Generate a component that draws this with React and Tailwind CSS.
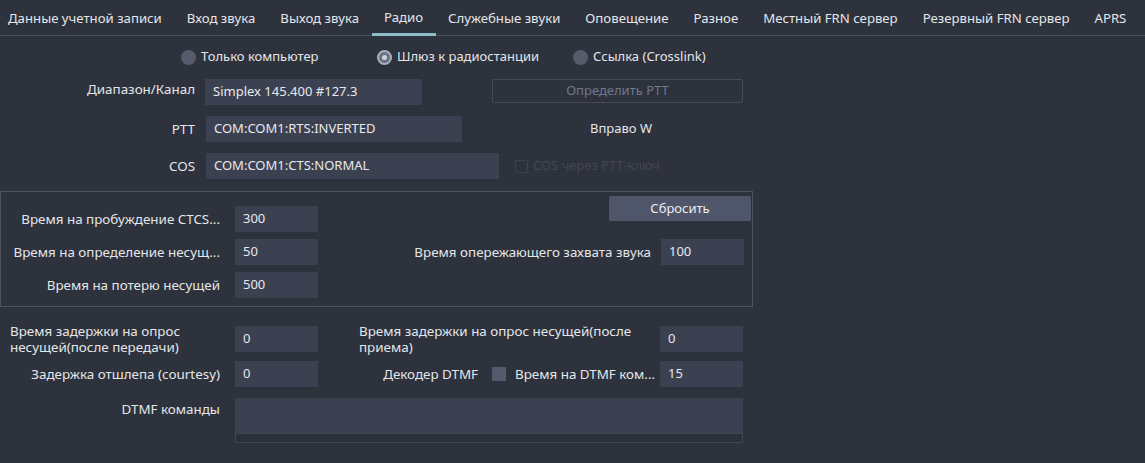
import React from 'react';

const tabs = [
  'Данные учетной записи',
  'Вход звука',
  'Выход звука',
  'Радио',
  'Служебные звуки',
  'Оповещение',
  'Разное',
  'Местный FRN сервер',
  'Резервный FRN сервер',
  'APRS',
];

function Field({ value = '', className = '' }) {
  return (
    <div className={`h-[26px] bg-[#3c4151] flex items-center pl-[8px] text-[13px] text-[#e8e8ec] ${className}`}>
      {value}
    </div>
  );
}

function Radio({ label, checked }) {
  return (
    <div className="flex items-center w-[196px]">
      {checked ? (
        <span className="w-[15px] h-[15px] rounded-full border-2 border-[#a9b1be] bg-[#6b7282] flex items-center justify-center">
          <span className="w-[5px] h-[5px] rounded-full bg-[#c9d2de]" />
        </span>
      ) : (
        <span className="w-[15px] h-[15px] rounded-full bg-[#575c6c]" />
      )}
      <span className="ml-[5px]">{label}</span>
    </div>
  );
}

function NumRow({ label, value }) {
  return (
    <div className="flex items-center h-[26px]">
      <div className="w-[219px] text-right whitespace-nowrap">{label}</div>
      <Field value={value} className="ml-[15px] w-[83px]" />
    </div>
  );
}

export default function App() {
  return (
    <div
      className="w-[1145px] h-[463px] bg-[#2d323c] text-[#e4e6ea] text-[13.4px] overflow-hidden"
      style={{ fontFamily: '"Noto Sans", "DejaVu Sans", sans-serif' }}
    >
      {/* Tabs */}
      <div className="flex h-[36px] border-b border-[#4a4f5a] -ml-[4.5px] text-[13.2px]">
        {tabs.map((t) => (
          <div
            key={t}
            className={`px-[12.5px] flex items-center whitespace-nowrap pt-[3px] ${
              t === 'Радио' ? 'border-b-[3px] border-[#8dbdc8] mb-[-1px]' : ''
            }`}
          >
            {t}
          </div>
        ))}
      </div>

      {/* Mode */}
      <div className="flex items-center h-[20px] mt-[11px] pl-[181px] text-[13px]">
        <Radio label="Только компьютер" />
        <Radio label="Шлюз к радиостанции" checked />
        <Radio label="Ссылка (Crosslink)" />
      </div>

      {/* Port settings */}
      <div className="flex items-start mt-[12px]">
        <div className="w-[195px] text-right">Диапазон/Канал</div>
        <Field value="Simplex 145.400 #127.3" className="ml-[10px] w-[217px]" />
        <div className="ml-[70px] w-[251px] h-[24px] border border-[#454a56] rounded-[2px] flex items-center justify-center text-[13px] text-[#6f7790]">
          Определить PTT
        </div>
      </div>
      <div className="flex items-center mt-[11px]">
        <div className="w-[195px] text-right">PTT</div>
        <Field value="COM:COM1:RTS:INVERTED" className="ml-[11px] w-[256px]" />
        <div className="ml-[128px] text-[13px]">Вправо W</div>
      </div>
      <div className="flex items-center mt-[11px]">
        <div className="w-[195px] text-right">COS</div>
        <Field value="COM:COM1:CTS:NORMAL" className="ml-[11px] w-[293px]" />
        <span className="ml-[16px] w-[13px] h-[13px] border border-[#3d424c] rounded-[2px]" />
        <span className="ml-[5px] text-[13px] text-[#424752]">COS через PTT-ключ</span>
      </div>

      {/* Timings group */}
      <div className="mt-[12px] w-[753px] h-[116px] border border-[#4d525d] flex">
        <div className="flex flex-col gap-[7px] pt-[14px]">
          <NumRow label="Время на пробуждение CTCS..." value="300" />
          <NumRow label="Время на определение несущ..." value="50" />
          <NumRow label="Время на потерю несущей" value="500" />
        </div>
        <div className="flex-1 flex flex-col items-end">
          <div className="mt-[4px] mr-[1px] w-[142px] h-[25px] bg-[#50566a] rounded-[2px] flex items-center justify-center text-[13px] text-[#eceef2]">
            Сбросить
          </div>
          <div className="flex items-center mt-[18px] mr-[8px]">
            <div className="text-right whitespace-nowrap">Время опережающего захвата звука</div>
            <Field value="100" className="ml-[10px] w-[83px]" />
          </div>
        </div>
      </div>

      {/* Delays */}
      <div className="flex items-center mt-[16px]">
        <div className="w-[235px] pl-[10px] leading-[16px]">
          Время задержки на опрос
          <br />
          несущей(после передачи)
        </div>
        <Field value="0" className="w-[83px]" />
        <div className="ml-[41px] w-[301px] leading-[16px]">
          Время задержки на опрос несущей(после
          <br />
          приема)
        </div>
        <Field value="0" className="w-[83px]" />
      </div>
      <div className="flex items-center mt-[6px]">
        <div className="w-[220px] text-right">Задержка отшлепа (courtesy)</div>
        <Field value="0" className="ml-[15px] w-[83px]" />
        <div className="w-[160px] text-right">Декодер DTMF</div>
        <span className="ml-[14px] w-[14px] h-[14px] bg-[#555a6d] rounded-[1px]" />
        <span className="ml-[9px] w-[145px] whitespace-nowrap">Время на DTMF ком...</span>
        <Field value="15" className="w-[83px]" />
      </div>
      <div className="flex items-start mt-[11px]">
        <div className="w-[220px] text-right pt-[1px]">DTMF команды</div>
        <div className="ml-[15px] w-[508px] flex flex-col">
          <div className="h-[35px] bg-[#3c4151]" />
          <div className="h-[10px] bg-[#2b3039] border border-[#41464f]" />
        </div>
      </div>
    </div>
  );
}
